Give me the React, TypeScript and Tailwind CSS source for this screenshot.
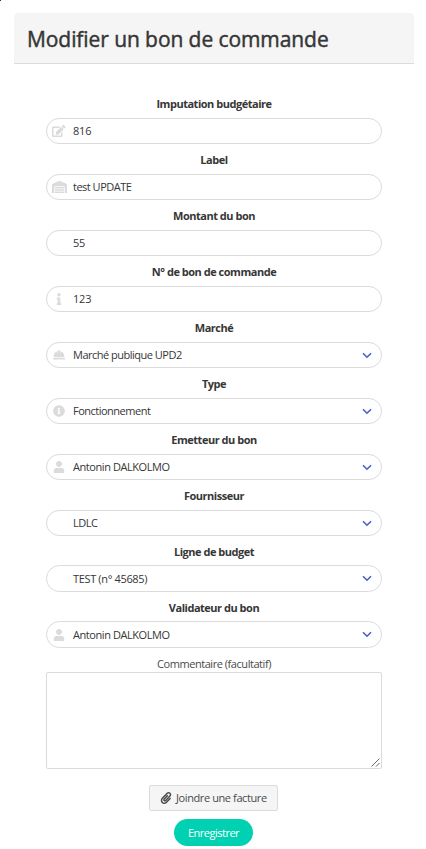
import { ReactNode } from 'react';
import { FaEdit, FaWarehouse, FaInfo, FaHardHat, FaInfoCircle, FaUser, FaPaperclip } from 'react-icons/fa';

type FieldProps = {
  label: string;
  labelClass?: string;
  value: string;
  valueClass?: string;
  icon?: ReactNode;
  select?: boolean;
  tall?: boolean;
};

const iconClass = 'size-3 shrink-0';

function Chevron() {
  return (
    <svg width="10" height="7" viewBox="0 0 10 7" fill="none" stroke="#485fc7" strokeWidth="1.6">
      <path d="M1 1.2 5 5.2 9 1.2" />
    </svg>
  );
}

function Field({
  label,
  labelClass = 'tracking-[-0.48px]',
  value,
  valueClass = 'tracking-[-0.5px]',
  icon,
  select,
  tall,
}: FieldProps) {
  return (
    <div className="h-14">
      <div className="flex h-[18px] justify-center text-[11px] leading-[18px] font-bold whitespace-nowrap text-[#363636]">
        <span className={labelClass}>{label}</span>
      </div>
      <div
        className={`flex items-center rounded-full border border-[#dbdbdb] bg-white pr-[9px] ${
          tall ? 'mt-1 h-[27px]' : 'mt-[5px] h-[26px]'
        }`}
      >
        <span className="mr-0.5 flex w-6 shrink-0 items-center justify-center text-[#dbdbdb]">{icon}</span>
        <span className={`grow text-[11px] leading-6 whitespace-nowrap text-[#363636] ${valueClass}`}>{value}</span>
        {select && <Chevron />}
      </div>
    </div>
  );
}

export default function App() {
  return (
    <div className="h-[849px] w-[426px] overflow-hidden bg-white font-['Open_Sans','Noto_Sans',sans-serif]">
      <div className="h-[13px]">
        <div className="size-px bg-[#363636]" />
      </div>
      <header className="mr-3 ml-[14px] flex h-[51px] items-center rounded-t border-b border-[#dbdbdb] bg-[#f5f5f5] pt-[3px] pl-[13px]">
        <h1 className="text-[21px] leading-none font-normal tracking-[-0.08px] whitespace-nowrap text-[#363636] [-webkit-text-stroke:0.45px_#363636]">
          Modifier un bon de commande
        </h1>
      </header>
      <main className="mt-[31px] ml-[46px] w-[336px]">
        <Field
          label="Imputation budgétaire"
          value="816"
          valueClass="tracking-[-0.2px]"
          icon={<FaEdit className="h-3 w-[13.5px] shrink-0" />}
        />
        <Field label="Label" value="test UPDATE" icon={<FaWarehouse className="h-3 w-[15px] shrink-0" />} />
        <Field label="Montant du bon" value="55" valueClass="tracking-[-0.2px]" />
        <Field
          label="N° de bon de commande"
          value="123"
          valueClass="tracking-[-0.2px]"
          icon={<FaInfo className={iconClass} />}
        />
        <Field label="Marché" value="Marché publique UPD2" icon={<FaHardHat className={iconClass} />} select />
        <Field label="Type" value="Fonctionnement" icon={<FaInfoCircle className={iconClass} />} select />
        <Field
          label="Emetteur du bon"
          value="Antonin DALKOLMO"
          valueClass="tracking-[-0.43px]"
          icon={<FaUser className={iconClass} />}
          select
        />
        <Field label="Fournisseur" value="LDLC" select />
        <Field label="Ligne de budget" value="TEST (n° 45685)" valueClass="tracking-[-0.35px]" select tall />
        <Field
          label="Validateur du bon"
          value="Antonin DALKOLMO"
          valueClass="tracking-[-0.43px]"
          icon={<FaUser className={iconClass} />}
          select
          tall
        />
        <div className="flex h-[17px] justify-center text-[11px] leading-[18px] tracking-[-0.45px] text-[#4a4a4a]">
          <span>Commentaire (facultatif)</span>
        </div>
        <div className="flex h-[97px] items-end justify-end rounded-[2px] border border-[#dbdbdb] pr-px pb-px">
          <svg width="9" height="9" viewBox="0 0 9 9" stroke="#555" strokeWidth="0.9">
            <path d="M0.5 8.5 8.5 0.5M5 8.5 8.5 5" />
          </svg>
        </div>
        <div className="mt-4 flex flex-col items-center pr-px">
          <button className="flex h-[26px] w-[129px] items-center rounded-[2px] border border-[#dbdbdb] bg-[#f5f5f5] pl-[10px] text-[11px] tracking-[-0.4px] whitespace-nowrap text-[#4a4a4a]">
            <FaPaperclip className="mr-1 size-3 shrink-0" />
            <span>Joindre une facture</span>
          </button>
          <button className="mt-2 flex h-[27px] w-[79px] items-center justify-center rounded-full bg-[#00d1b2] pt-px text-[11px] tracking-[-0.5px] whitespace-nowrap text-white">
            Enregistrer
          </button>
        </div>
      </main>
    </div>
  );
}
